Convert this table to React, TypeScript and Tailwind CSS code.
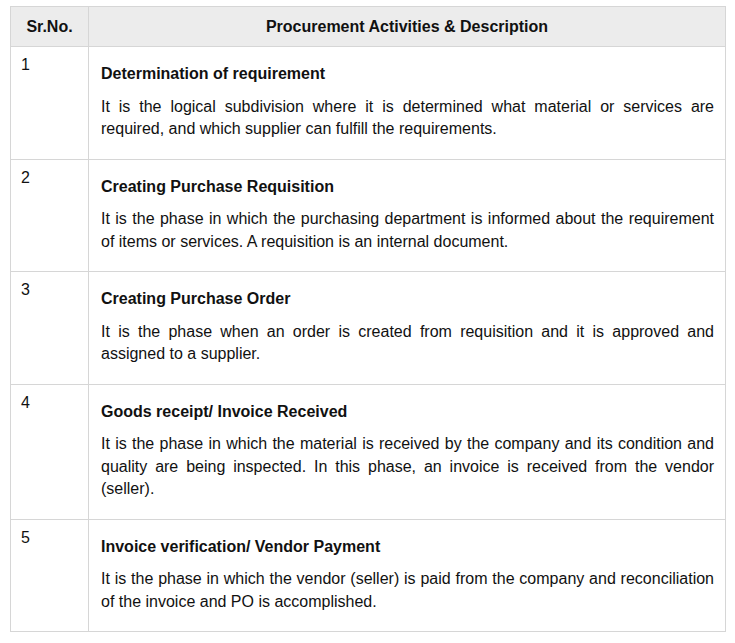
import React from "react";

interface Activity {
  no: number;
  title: string;
  text: string;
}

const activities: Activity[] = [
  {
    no: 1,
    title: "Determination of requirement",
    text: "It is the logical subdivision where it is determined what material or services are required, and which supplier can fulfill the requirements.",
  },
  {
    no: 2,
    title: "Creating Purchase Requisition",
    text: "It is the phase in which the purchasing department is informed about the requirement of items or services. A requisition is an internal document.",
  },
  {
    no: 3,
    title: "Creating Purchase Order",
    text: "It is the phase when an order is created from requisition and it is approved and assigned to a supplier.",
  },
  {
    no: 4,
    title: "Goods receipt/ Invoice Received",
    text: "It is the phase in which the material is received by the company and its condition and quality are being inspected. In this phase, an invoice is received from the vendor (seller).",
  },
  {
    no: 5,
    title: "Invoice verification/ Vendor Payment",
    text: "It is the phase in which the vendor (seller) is paid from the company and reconciliation of the invoice and PO is accomplished.",
  },
];

const App: React.FC = () => {
  return (
    <div className="min-h-screen bg-white px-[10px] pt-[6px] font-['Liberation_Sans',Arial,sans-serif] text-[16px] text-[#111]">
      <table className="w-[716px] border-collapse">
        <thead>
          <tr className="bg-[#ececec]">
            <th className="h-[40px] w-[78px] border border-[#d6d6d6] text-center font-bold">
              Sr.No.
            </th>
            <th className="h-[40px] border border-[#d6d6d6] text-center font-bold">
              Procurement Activities &amp; Description
            </th>
          </tr>
        </thead>
        <tbody>
          {activities.map((a) => (
            <tr key={a.no}>
              <td className="border border-[#d6d6d6] px-[10px] pt-[8px] align-top leading-[20px]">
                {a.no}
              </td>
              <td className="border border-[#d6d6d6] pl-[12px] pr-[11px] pt-[16px] pb-[18px] align-top">
                <h3 className="font-bold leading-[22.5px]">{a.title}</h3>
                <p className="mt-[10px] text-justify leading-[22.5px]">{a.text}</p>
              </td>
            </tr>
          ))}
        </tbody>
      </table>
    </div>
  );
};

export default App;
